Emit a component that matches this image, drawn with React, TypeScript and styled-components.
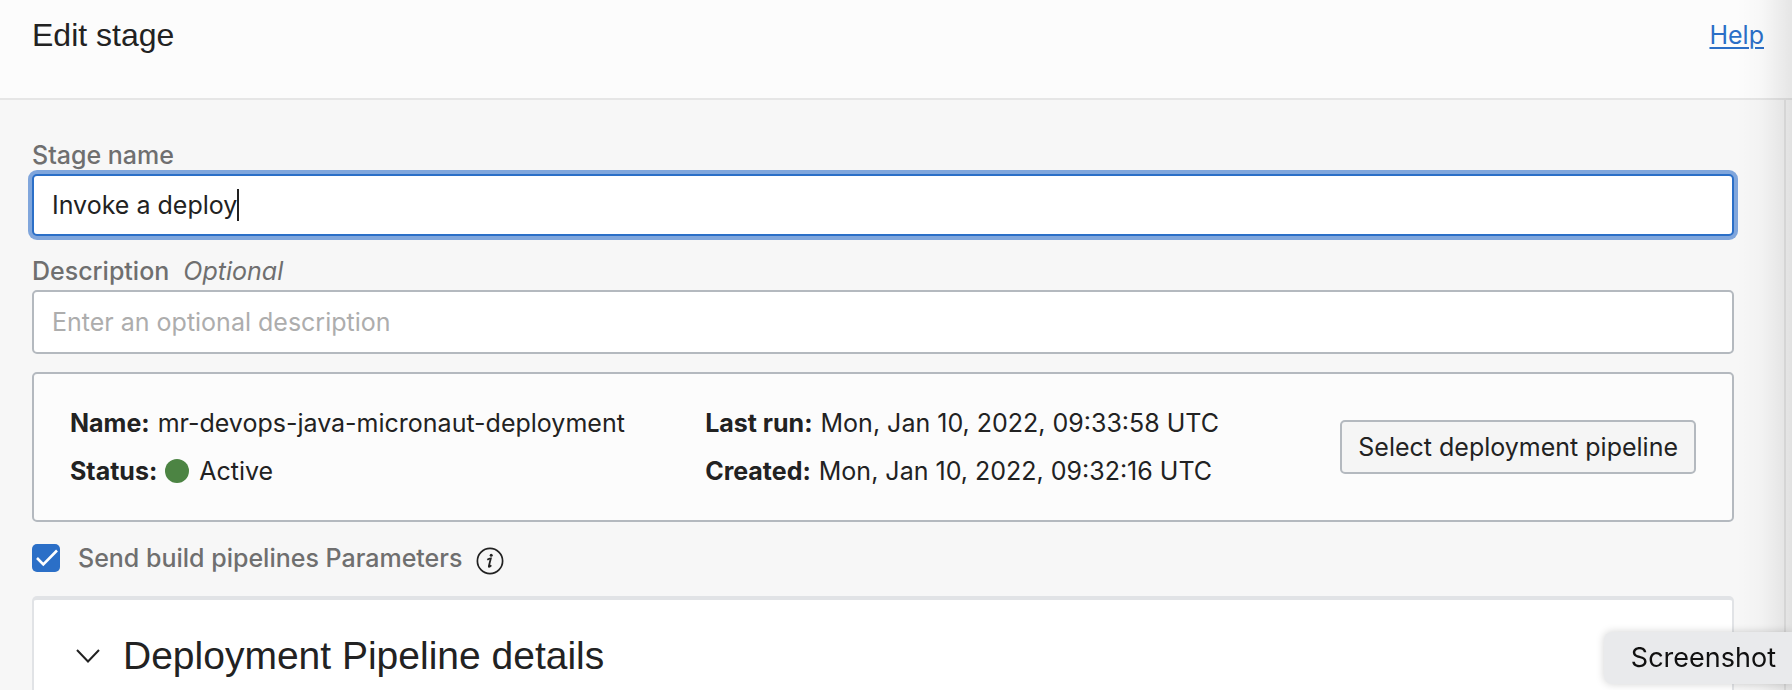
import React, { useState } from "react";
import styled, { createGlobalStyle } from "styled-components";

const GlobalStyle = createGlobalStyle`
  * { box-sizing: border-box; }
  body {
    margin: 0;
    background: #f7f7f7;
    color: #222;
    font-family: Inter, "Liberation Sans", sans-serif;
    font-size: 25px;
    line-height: 32px;
  }
`;

const Page = styled.div`
  position: relative;
  display: flex;
  flex-direction: column;
  min-height: 100vh;
`;

const EdgeShade = styled.div`
  position: absolute;
  top: 0;
  right: 0;
  bottom: 0;
  width: 56px;
  pointer-events: none;
  background: linear-gradient(to right, rgba(0, 0, 0, 0), rgba(0, 0, 0, 0.02) 45%, rgba(0, 0, 0, 0.09));
`;

const Header = styled.header`
  display: flex;
  align-items: flex-start;
  justify-content: space-between;
  padding: 15px 28px 43px 32px;
  background: #fcfcfc;
  border-bottom: 2px solid #e6e6e6;
`;

const Title = styled.h1`
  margin: 0;
  font: 400 32px/40px "Liberation Sans", sans-serif;
`;

const HelpLink = styled.a`
  padding: 4px 0;
  color: #2b6fc7;
  text-decoration: underline;
  text-decoration-thickness: 2px;
  text-underline-offset: 3px;
`;

const Main = styled.main`
  flex: 1;
  display: flex;
  flex-direction: column;
  margin-right: 6px;
  padding: 20px 50px 0 32px;
  border-right: 2px solid #e6e6e6;
`;

const Field = styled.div`
  display: flex;
  flex-direction: column;
  gap: 3px;
  margin-top: 19px;
`;

const FieldLabel = styled.label`
  color: #6f6f6f;
  font-weight: 500;
`;

const Optional = styled.em`
  margin-left: 14px;
  font-weight: 400;
`;

const InputBox = styled.div<{ $active?: boolean }>`
  display: flex;
  align-items: center;
  height: ${(p) => (p.$active ? 62 : 64)}px;
  padding: 0 18px;
  background: #fff;
  border: 2px solid ${(p) => (p.$active ? "#2b6fc7" : "#b4b9bf")};
  border-radius: 5px;
  box-shadow: ${(p) => (p.$active ? "0 0 0 4px #80a6dc" : "none")};
`;

const TextInput = styled.input<{ $grow?: boolean }>`
  ${(p) => (p.$grow ? "flex: 1;" : "field-sizing: content;")}
  min-width: 0;
  padding: 0;
  border: 0;
  outline: 0;
  background: transparent;
  color: #222;
  font: inherit;
  caret-color: transparent;
  &::placeholder { color: #adadad; opacity: 1; }
`;

const Caret = styled.span`
  width: 2px;
  height: 32px;
  background: #222;
`;

const Card = styled.section`
  display: grid;
  grid-template-columns: 1fr 1fr auto;
  align-items: center;
  margin-top: 18px;
  padding: 25px 36px;
  background: #fcfcfc;
  border: 2px solid #b4b9bf;
  border-radius: 5px;
`;

const Facts = styled.dl`
  margin: 0;
  line-height: 48px;
`;

const Fact = styled.div`
  display: flex;
  align-items: center;
  gap: 8px;
  white-space: nowrap;
`;

const Term = styled.dt`
  font-weight: 700;
`;

const Value = styled.dd`
  display: flex;
  align-items: center;
  gap: 10px;
  margin: 0;
`;

const StatusDot = styled.span`
  width: 24px;
  height: 24px;
  border-radius: 50%;
  background: #4c8443;
`;

const PickButton = styled.button`
  height: 54px;
  padding: 0 16px;
  background: #f5f5f5;
  border: 2px solid #b4b9bf;
  border-radius: 5px;
  color: #222;
  font: inherit;
  white-space: nowrap;
`;

const CheckRow = styled.div`
  display: flex;
  align-items: center;
  height: 34px;
  margin: 19px 0 21px;
`;

const Checkbox = styled.input`
  appearance: none;
  width: 28px;
  height: 28px;
  margin: 0 18px 0 0;
  border: 2px solid #b4b9bf;
  border-radius: 5px;
  background: #fff;
  &:checked {
    border: 0;
    background: #2b6fc7 url("data:image/svg+xml,%3Csvg xmlns='http://www.w3.org/2000/svg' viewBox='0 0 28 28'%3E%3Cpath d='M5 14l6.300 6.300L25 6.500' fill='none' stroke='white' stroke-width='2.600'/%3E%3C/svg%3E");
  }
`;

const InfoButton = styled.button`
  display: flex;
  align-self: flex-end;
  margin-left: 14px;
  padding: 0;
  border: 0;
  background: none;
  color: #222;
`;

const Panel = styled.section`
  flex: 1;
  padding: 34px 36px;
  background: #fff;
  border: 2px solid #e1e3e6;
  border-top-width: 4px;
  border-bottom: 0;
  border-radius: 5px 5px 0 0;
`;

const PanelTitle = styled.h2`
  margin: 0;
`;

const PanelToggle = styled.button`
  display: flex;
  align-items: center;
  gap: 17px;
  padding: 0;
  border: 0;
  background: none;
  color: #222;
  font: 400 39px/44px "Liberation Sans", sans-serif;
`;

const Tooltip = styled.div`
  position: fixed;
  right: 0;
  bottom: 6px;
  padding: 10px 16px 10px 27px;
  background: #e9eaec;
  border-radius: 8px 0 0 8px;
  box-shadow: 0 0 8px rgba(0, 0, 0, 0.18);
  color: #111;
  font-size: 27px;
`;

const InfoIcon = () => (
  <svg width="28" height="28" viewBox="0 0 28 28" fill="none" aria-hidden="true">
    <circle cx="14" cy="14" r="12.600" stroke="currentColor" strokeWidth="1.700" />
    <circle cx="15.200" cy="8.300" r="1.500" fill="currentColor" />
    <path
      d="M11.300 12.700c1.300-.8 2.500-1.200 3.500-1.300l-1.900 7.500c-.2.900.1 1.100.7.700.6-.3 1.100-.8 1.700-1.300"
      stroke="currentColor"
      strokeWidth="1.800"
    />
  </svg>
);

const Chevron = () => (
  <svg width="36" height="28" viewBox="0 0 36 28" fill="none" aria-hidden="true">
    <path d="M7 8l11 11.500L29 8" stroke="currentColor" strokeWidth="2" />
  </svg>
);

const App: React.FC = () => {
  const [name, setName] = useState("Invoke a deploy");
  const [send, setSend] = useState(true);

  return (
    <>
      <GlobalStyle />
      <Page>
        <Header>
          <Title>Edit stage</Title>
          <HelpLink href="#help">Help</HelpLink>
        </Header>
        <Main>
          <Field>
            <FieldLabel htmlFor="stage-name">Stage name</FieldLabel>
            <InputBox $active>
              <TextInput id="stage-name" value={name} onChange={(e) => setName(e.target.value)} />
              <Caret />
            </InputBox>
          </Field>
          <Field>
            <FieldLabel htmlFor="description">
              Description
              <Optional>Optional</Optional>
            </FieldLabel>
            <InputBox>
              <TextInput $grow id="description" placeholder="Enter an optional description" />
            </InputBox>
          </Field>
          <Card>
            <Facts>
              <Fact>
                <Term>Name:</Term>
                <Value>mr-devops-java-micronaut-deployment</Value>
              </Fact>
              <Fact>
                <Term>Status:</Term>
                <Value>
                  <StatusDot />
                  Active
                </Value>
              </Fact>
            </Facts>
            <Facts>
              <Fact>
                <Term>Last run:</Term>
                <Value>Mon, Jan 10, 2022, 09:33:58 UTC</Value>
              </Fact>
              <Fact>
                <Term>Created:</Term>
                <Value>Mon, Jan 10, 2022, 09:32:16 UTC</Value>
              </Fact>
            </Facts>
            <PickButton type="button">Select deployment pipeline</PickButton>
          </Card>
          <CheckRow>
            <Checkbox
              type="checkbox"
              id="send-parameters"
              checked={send}
              onChange={(e) => setSend(e.target.checked)}
            />
            <FieldLabel htmlFor="send-parameters">Send build pipelines Parameters</FieldLabel>
            <InfoButton type="button" aria-label="More information">
              <InfoIcon />
            </InfoButton>
          </CheckRow>
          <Panel>
            <PanelTitle>
              <PanelToggle type="button" aria-expanded="true">
                <Chevron />
                Deployment Pipeline details
              </PanelToggle>
            </PanelTitle>
          </Panel>
        </Main>
        <EdgeShade />
      </Page>
      <Tooltip role="tooltip">Screenshot</Tooltip>
    </>
  );
};

export default App;
